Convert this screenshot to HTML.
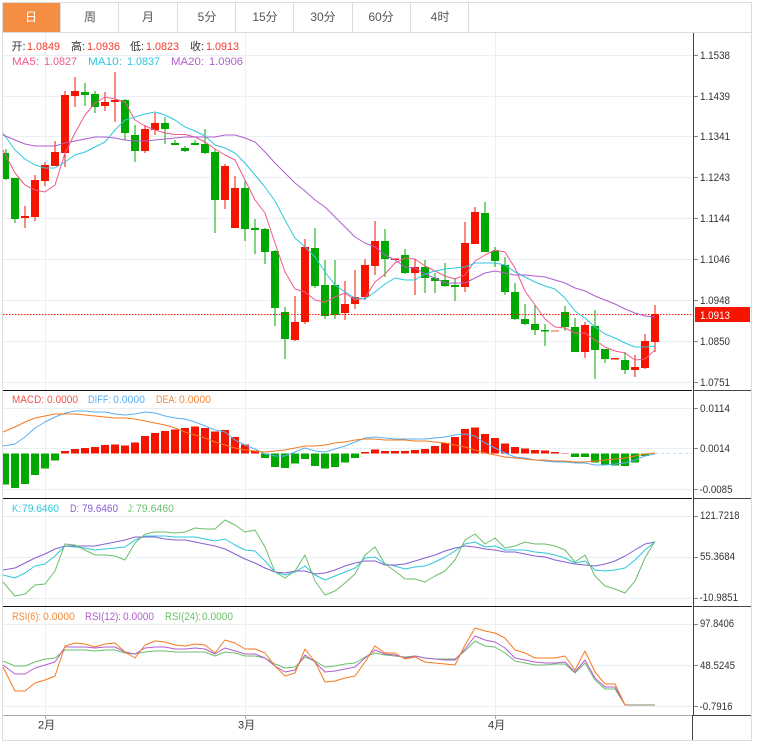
<!DOCTYPE html>
<html><head><meta charset="utf-8"><style>
html,body{margin:0;padding:0;background:#fff;width:757px;height:746px;overflow:hidden}
svg{display:block}
text{font-family:"Liberation Sans","Noto Sans CJK SC",sans-serif;font-size:11px}
.t{font-size:12px;fill:#555;text-anchor:middle}
.a{fill:#333}
.l{fill:none;stroke-width:1;stroke-linejoin:round}
</style></head><body>
<svg width="757" height="746" viewBox="0 0 757 746" xmlns="http://www.w3.org/2000/svg">
<rect x="2.5" y="2.5" width="749" height="738" fill="#fff" stroke="#dcdcdc"/>
<rect x="3" y="3" width="57" height="29" fill="#f58d42"/>
<path d="M60.5 3V32M118.5 3V32M177.5 3V32M235.5 3V32M293.5 3V32M352.5 3V32M410.5 3V32M468.5 3V32M3 32.5H751" stroke="#dcdcdc" fill="none"/>
<text class="t" x="31" y="21" style="fill:#fff">日</text>
<text class="t" x="90" y="21">周</text>
<text class="t" x="148" y="21">月</text>
<text class="t" x="207" y="21">5分</text>
<text class="t" x="265" y="21">15分</text>
<text class="t" x="323" y="21">30分</text>
<text class="t" x="381" y="21">60分</text>
<text class="t" x="440" y="21">4时</text>

<!-- grid -->
<path d="M3 55.5H692M3 96.5H692M3 136.5H692M3 177.5H692M3 218.5H692M3 259.5H692M3 300.5H692M3 341.5H692M3 382.5H692M3 408.5H692M3 448.5H692M3 489.5H692M3 516.5H692M3 557.5H692M3 598.5H692M3 624.5H692M3 665.5H692M3 706.5H692M45.5 33V715M245.5 33V715M495.5 33V715" stroke="#e9eff3" fill="none"/>

<!-- candle wicks -->
<g stroke-width="1" fill="none">
<path stroke="#00a800" d="M6 149V180M15 178V223M85 83V106M95 91V113M125 99V140M135 125V162M165 117V144M175 140V145M185 146V152M195 140V145M205 129V154M215 149V233M245 181V241M255 219V254M265 228V264M275 250V326M285 307V359M315 228V288M325 260V319M335 260V319M385 229V277M405 249V274M425 260V293M435 273V293M445 263V287M455 278V301M485 202V252M495 247V267M505 257V295M515 283V320M525 304V325M535 305V335M545 324V346M565 306V331M575 318V352M595 310V379M605 349V363M625 352V374"/>
<path stroke="#f51400" d="M25 206V228M35 175V221M45 162V186M55 141V166M65 91V167M75 77V107M105 92V111M115 72V122M145 125V153M155 113V135M225 164V209M235 176V228M295 296V341M305 239V324M345 281V320M355 270V309M365 259V300M375 221V275M415 259V295M465 222V292M475 207V244M585 322V358M635 355V377M645 334V369M655 305V352"/>
</g>
<!-- green bodies -->
<g fill="#00a800">
<rect x="3" y="153" width="6" height="26"/><rect x="11" y="178" width="8" height="41"/><rect x="81" y="92" width="8" height="3"/><rect x="91" y="94" width="8" height="13"/><rect x="121" y="100" width="8" height="33"/><rect x="131" y="135" width="8" height="16"/><rect x="161" y="123" width="8" height="6"/><rect x="171" y="143" width="8" height="2"/><rect x="181" y="148" width="8" height="3"/><rect x="191" y="143" width="8" height="2"/><rect x="201" y="144" width="8" height="9"/><rect x="211" y="152" width="8" height="48"/><rect x="241" y="188" width="8" height="41"/><rect x="251" y="228" width="8" height="2"/><rect x="261" y="229" width="8" height="23"/><rect x="271" y="251" width="8" height="57"/><rect x="281" y="312" width="8" height="27"/><rect x="311" y="248" width="8" height="38"/><rect x="321" y="285" width="8" height="31"/><rect x="331" y="285" width="8" height="30"/><rect x="381" y="241" width="8" height="18"/><rect x="401" y="255" width="8" height="18"/><rect x="421" y="267" width="8" height="11"/><rect x="431" y="278" width="8" height="3"/><rect x="441" y="280" width="8" height="6"/><rect x="451" y="285" width="8" height="2"/><rect x="481" y="213" width="8" height="39"/><rect x="491" y="251" width="8" height="10"/><rect x="501" y="265" width="8" height="27"/><rect x="511" y="292" width="8" height="27"/><rect x="521" y="319" width="8" height="5"/><rect x="531" y="324" width="8" height="6"/><rect x="541" y="330" width="8" height="1.5"/><rect x="561" y="312" width="8" height="15"/><rect x="571" y="327" width="8" height="25"/><rect x="591" y="326" width="8" height="24"/><rect x="601" y="349" width="8" height="10"/><rect x="621" y="360" width="8" height="10"/>
</g>
<!-- red bodies -->
<g fill="#f51400">
<rect x="21" y="216" width="8" height="2"/><rect x="31" y="180" width="8" height="37"/><rect x="41" y="165" width="8" height="16"/><rect x="51" y="152" width="8" height="14"/><rect x="61" y="95" width="8" height="58"/><rect x="71" y="91" width="8" height="5"/><rect x="101" y="102" width="8" height="4"/><rect x="111" y="100" width="8" height="2"/><rect x="141" y="129" width="8" height="22"/><rect x="151" y="123" width="8" height="7"/><rect x="221" y="166" width="8" height="34"/><rect x="231" y="188" width="8" height="40"/><rect x="291" y="322" width="8" height="18"/><rect x="301" y="247" width="8" height="75"/><rect x="341" y="304" width="8" height="9"/><rect x="351" y="297" width="8" height="7"/><rect x="361" y="265" width="8" height="32"/><rect x="371" y="241" width="8" height="25"/><rect x="391" y="258.500" width="8" height="1.500"/><rect x="411" y="267" width="8" height="6"/><rect x="461" y="243" width="8" height="44"/><rect x="471" y="212" width="8" height="32"/><rect x="581" y="325" width="8" height="27"/><rect x="611" y="358" width="8" height="1.500"/><rect x="631" y="367" width="8" height="3"/><rect x="641" y="341" width="8" height="27"/><rect x="651" y="314" width="8" height="28"/>
<rect x="551" y="330" width="8" height="2" fill="#f9a8a0"/>
</g>
<path d="M3 314.500H693" stroke="#f51400" stroke-dasharray="1.500 1.500" fill="none"/>

<!-- MA lines -->
<polyline class="l" stroke="#f0588c" points="3,150 15,173 25,185 35,190 45,192 55,185 65,153 75,133 85,115 95,103 105,97 115,99 125,102 135,120 145,126 155,130 165,133 175,134.500 185,134.500 195,137 205,142 215,149 225,155 235,160 245,180 255,200 265,213 275,243 285,272 295,289 305,292 315,300 325,302 335,297 345,293 355,300 365,298 375,282 385,274 395,263 405,258 415,259 425,266 435,271 445,276 455,279 465,275 475,261 485,255 495,250 505,252 515,268 525,291 535,305 545,319 555,327 565,328 575,333 585,333 595,340 605,347 615,351 625,353 635,360 645,359 655,350"/>
<polyline class="l" stroke="#2fc8dc" points="3,133 15,150 25,159 35,165 45,168 55,168 65,162 75,155 85,152 95,147 105,142 115,130 125,120 135,117 145,114 155,112 165,115 175,120 185,127 195,131 205,136 215,145 225,148 235,153 245,163 255,175 265,187 275,201 285,220 295,238 305,247 315,257 325,272 335,285 345,292 355,298 365,299 375,292 385,284 395,278 405,280 415,280 425,274 435,271 445,269 455,268 465,267 475,263 485,263 495,263 505,265 515,272 525,277 535,282 545,286 555,289 565,298 575,311 585,318 595,327 605,334 615,338 625,343 635,347 645,347 655,346"/>
<polyline class="l" stroke="#b05ecf" points="3,135 15,140 25,144 35,146 45,146 55,146 65,143 75,141 85,139 95,137 105,137 115,138 125,140 135,141 145,141 155,140 165,139 175,138 185,137 195,137 205,137 215,137 225,135 235,135 245,138 255,142 265,152 275,163 285,173 295,183 305,191 315,200 325,207 335,217 345,227 355,237 365,243 375,247 385,255 395,260 405,267 415,268 425,274 435,278 445,283 455,283 465,283 475,278 485,273 495,271 505,273 515,275 525,275 535,276 545,277 555,280 565,283 575,288 585,291 595,296 605,300 615,304 625,309 635,313 645,316 655,317"/>

<text x="11.500" y="50" fill="#333">开:</text><text x="27" y="50" fill="#f5382c" textLength="33" lengthAdjust="spacingAndGlyphs">1.0849</text>
<text x="71" y="50" fill="#333">高:</text><text x="87" y="50" fill="#f5382c" textLength="33" lengthAdjust="spacingAndGlyphs">1.0936</text>
<text x="130" y="50" fill="#333">低:</text><text x="146" y="50" fill="#f5382c" textLength="33" lengthAdjust="spacingAndGlyphs">1.0823</text>
<text x="190" y="50" fill="#333">收:</text><text x="206" y="50" fill="#f5382c" textLength="33" lengthAdjust="spacingAndGlyphs">1.0913</text>
<text x="12" y="65" fill="#f0588c" textLength="27" lengthAdjust="spacingAndGlyphs">MA5:</text><text x="44" y="65" fill="#f0588c" textLength="33" lengthAdjust="spacingAndGlyphs">1.0827</text>
<text x="88" y="65" fill="#2fc8dc" textLength="34" lengthAdjust="spacingAndGlyphs">MA10:</text><text x="127" y="65" fill="#2fc8dc" textLength="33" lengthAdjust="spacingAndGlyphs">1.0837</text>
<text x="171" y="65" fill="#b05ecf" textLength="33" lengthAdjust="spacingAndGlyphs">MA20:</text><text x="209" y="65" fill="#b05ecf" textLength="34" lengthAdjust="spacingAndGlyphs">1.0906</text>

<!-- MACD bars -->
<g fill="#00a800">
<rect x="3" y="453.500" width="6" height="31"/><rect x="11" y="453.500" width="8" height="34.500"/><rect x="21" y="453.500" width="8" height="30.500"/><rect x="31" y="453.500" width="8" height="21.500"/><rect x="41" y="453.500" width="8" height="15"/><rect x="51" y="453.500" width="8" height="7"/><rect x="261" y="453.500" width="8" height="4.500"/><rect x="271" y="453.500" width="8" height="13.500"/><rect x="281" y="453.500" width="8" height="14.500"/><rect x="291" y="453.500" width="8" height="10"/><rect x="301" y="453.500" width="8" height="5.500"/><rect x="311" y="453.500" width="8" height="12.500"/><rect x="321" y="453.500" width="8" height="15"/><rect x="331" y="453.500" width="8" height="13.500"/><rect x="341" y="453.500" width="8" height="9"/><rect x="351" y="453.500" width="8" height="4.500"/><rect x="571" y="453.500" width="8" height="3.500"/><rect x="581" y="453.500" width="8" height="3.500"/><rect x="591" y="453.500" width="8" height="9"/><rect x="601" y="453.500" width="8" height="11"/><rect x="611" y="453.500" width="8" height="12"/><rect x="621" y="453.500" width="8" height="12.500"/><rect x="631" y="453.500" width="8" height="9"/><rect x="641" y="453.500" width="8" height="2.500"/>
</g>
<g fill="#f51400">
<rect x="61" y="451" width="8" height="2.500"/><rect x="71" y="449" width="8" height="4.500"/><rect x="81" y="448" width="8" height="5.500"/><rect x="91" y="447" width="8" height="6.500"/><rect x="101" y="445" width="8" height="8.500"/><rect x="111" y="444.500" width="8" height="9"/><rect x="121" y="445.500" width="8" height="8"/><rect x="131" y="442.500" width="8" height="11"/><rect x="141" y="436" width="8" height="17.500"/><rect x="151" y="433" width="8" height="20.500"/><rect x="161" y="431" width="8" height="22.500"/><rect x="171" y="429.500" width="8" height="24"/><rect x="181" y="428" width="8" height="25.500"/><rect x="191" y="426.500" width="8" height="27"/><rect x="201" y="428" width="8" height="25.500"/><rect x="211" y="431.500" width="8" height="22"/><rect x="221" y="430" width="8" height="23.500"/><rect x="231" y="437" width="8" height="16.500"/><rect x="241" y="444.500" width="8" height="9"/><rect x="251" y="450.500" width="8" height="3"/><rect x="361" y="452" width="8" height="1.500"/><rect x="371" y="449.500" width="8" height="4"/><rect x="381" y="451" width="8" height="2.500"/><rect x="391" y="451" width="8" height="2.500"/><rect x="401" y="451" width="8" height="2.500"/><rect x="411" y="450" width="8" height="3.500"/><rect x="421" y="449" width="8" height="4.500"/><rect x="431" y="446" width="8" height="7.500"/><rect x="441" y="443" width="8" height="10.500"/><rect x="451" y="437" width="8" height="16.500"/><rect x="461" y="429" width="8" height="24.500"/><rect x="471" y="427.500" width="8" height="26"/><rect x="481" y="434" width="8" height="19.500"/><rect x="491" y="438" width="8" height="15.500"/><rect x="501" y="443.500" width="8" height="10"/><rect x="511" y="447" width="8" height="6.500"/><rect x="521" y="448.500" width="8" height="5"/><rect x="531" y="450" width="8" height="3.500"/><rect x="541" y="450.500" width="8" height="3"/><rect x="551" y="452" width="8" height="1.500"/>
<rect x="561" y="453" width="8" height="1" fill="#f9a8a0"/>
</g>
<path d="M655 453.500H692" stroke="#bfe0f7" stroke-dasharray="3 3" fill="none"/>
<polyline class="l" stroke="#5ab0f5" points="3,446 15,444 25,437 35,428 45,422 55,417 65,413 75,411 85,411 95,412 105,412 115,414 125,415 135,414 145,412 155,413 165,416 175,418 185,419 195,422 205,426 215,430 225,432 235,440 245,445 255,449 265,454 275,456 285,456 295,452 305,448 315,451 325,452 335,449 345,446 355,442 365,438 375,437 385,438 395,439 405,439 415,439 425,439 435,438 445,437 455,435 465,434 475,436 485,443 495,448 505,453 515,457 525,458 535,460 545,461 555,462 565,462 575,463 585,463 595,465 605,465 615,464 625,463 635,460 645,456 655,454"/>
<polyline class="l" stroke="#f57a1f" points="3,432 15,427 25,422 35,418 45,416 55,414 65,414 75,414 85,415 95,416 105,417 115,418 125,418 135,419 145,421 155,423 165,425 175,428 185,432 195,435 205,438 215,442 225,445 235,448 245,450 255,451 265,452 275,451 285,450 295,448 305,446 315,446 325,445 335,443 345,442 355,440 365,439 375,439 385,440 395,440 405,440 415,441 425,441 435,442 445,443 455,445 465,447 475,450 485,453 495,455 505,457 515,458 525,459 535,460 545,460 555,461 565,461 575,462 585,462 595,461 605,460 615,459 625,458 635,456 645,454 655,453"/>
<text x="12" y="403" fill="#f5544a" textLength="32" lengthAdjust="spacingAndGlyphs">MACD:</text><text x="47" y="403" fill="#f5544a" textLength="31" lengthAdjust="spacingAndGlyphs">0.0000</text>
<text x="88" y="403" fill="#5ab0f5" textLength="23" lengthAdjust="spacingAndGlyphs">DIFF:</text><text x="113" y="403" fill="#5ab0f5" textLength="32" lengthAdjust="spacingAndGlyphs">0.0000</text>
<text x="156" y="403" fill="#f58a3a" textLength="21" lengthAdjust="spacingAndGlyphs">DEA:</text><text x="179" y="403" fill="#f58a3a" textLength="32" lengthAdjust="spacingAndGlyphs">0.0000</text>

<!-- KDJ -->
<polyline class="l" stroke="#2fc8dc" points="3,575 15,578 25,573 35,566 45,564 55,556 65,546 75,547 85,548 95,550 105,549 115,548 125,547 135,540 145,536 155,536 165,536 175,537 185,537 195,537 205,539 215,541 225,539 235,545 245,550 255,551 265,561 275,572 285,575 295,572 305,566 315,575 325,580 335,576 345,572 355,568 365,558 375,557 385,564 395,566 405,569 415,567 425,566 435,562 445,557 455,551 465,544 475,542 485,547 495,546 505,550 515,550 525,550 535,552 545,553 555,555 565,558 575,563 585,561 595,570 605,571 615,570 625,568 635,560 645,550 655,542"/>
<polyline class="l" stroke="#8a5fd0" points="3,570 15,568 25,563 35,558 45,554 55,549 65,546 75,546 85,546 95,546 105,544 115,542 125,540 135,537 145,537 155,537 165,539 175,540 185,540 195,542 205,544 215,546 225,549 235,554 245,559 255,563 265,568 275,572 285,573 295,571 305,571 315,574 325,573 335,570 345,566 355,563 365,561 375,561 385,565 395,565 405,564 415,561 425,558 435,555 445,551 455,548 465,546 475,547 485,549 495,550 505,552 515,552 525,554 535,556 545,557 555,560 565,562 575,564 585,565 595,566 605,564 615,561 625,556 635,550 645,544 655,542"/>
<polyline class="l" stroke="#6bbf6b" points="3,582 15,596 25,594 35,585 45,584 55,571 65,544 75,545 85,550 95,555 105,555 115,556 125,560 135,543 145,534 155,532 165,532 175,533 185,532 195,528 205,529 215,529 225,520 235,525 245,532 255,530 265,547 275,572 285,578 295,571 305,555 315,581 325,595 335,591 345,583 355,574 365,555 375,547 385,564 395,571 405,579 415,579 425,582 435,576 445,571 455,560 465,540 475,534 485,544 495,538 505,548 515,546 525,542 535,544 545,544 555,546 565,550 575,562 585,555 595,576 605,586 615,589 625,593 635,581 645,558 655,541"/>
<text x="12" y="512" fill="#2fc8dc" textLength="9" lengthAdjust="spacingAndGlyphs">K:</text><text x="22" y="512" fill="#2fc8dc" textLength="37" lengthAdjust="spacingAndGlyphs">79.6460</text>
<text x="70" y="512" fill="#8a5fd0" textLength="9" lengthAdjust="spacingAndGlyphs">D:</text><text x="82" y="512" fill="#8a5fd0" textLength="36" lengthAdjust="spacingAndGlyphs">79.6460</text>
<text x="128" y="512" fill="#6bbf6b" textLength="6" lengthAdjust="spacingAndGlyphs">J:</text><text x="136" y="512" fill="#6bbf6b" textLength="38" lengthAdjust="spacingAndGlyphs">79.6460</text>

<!-- RSI -->
<polyline class="l" stroke="#6bbf6b" points="3,661 15,666 25,666 35,662 45,659 55,658 65,650 75,650 85,650 95,651 105,650 115,650 125,653 135,654 145,652 155,651 165,651 175,652 185,652 195,652 205,652 215,656 225,652 235,653 245,656 255,656 265,658 275,664 285,668 295,667 305,657 315,661 325,667 335,666 345,664 355,663 365,657 375,653 385,655 395,656 405,657 415,656 425,658 435,659 445,659 455,659 465,651 475,641 485,646 495,647 505,653 515,661 525,663 535,665 545,665 555,664 565,664 575,673 585,663 595,680 605,689 615,689 625,705 655,705"/>
<polyline class="l" stroke="#b05ecf" points="3,665 15,674 25,674 35,668 45,665 55,662 65,647 75,647 85,647 95,648 105,647 115,647 125,652 135,654 145,648 155,647 165,647 175,649 185,649 195,648 205,649 215,654 225,648 235,651 245,654 255,654 265,658 275,666 285,672 295,670 305,655 315,662 325,672 335,671 345,669 355,667 365,658 375,650 385,654 395,655 405,658 415,656 425,658 435,659 445,660 455,660 465,649 475,636 485,640 495,642 505,648 515,658 525,660 535,662 545,663 555,663 565,662 575,672 585,660 595,678 605,687 615,687 625,705 655,705"/>
<polyline class="l" stroke="#f57a1f" points="3,667 15,691 25,691 35,683 45,680 55,676 65,646 75,643 85,644 95,647 105,644 115,643 125,652 135,658 145,645 155,641 165,642 175,645 185,646 195,644 205,645 215,653 225,640 235,643 245,649 255,649 265,653 275,666 285,676 295,673 305,649 315,662 325,682 335,681 345,678 355,676 365,662 375,646 385,653 395,653 405,659 415,657 425,662 435,663 445,664 455,665 465,645 475,628 485,631 495,633 505,638 515,650 525,653 535,658 545,658 555,658 565,656 575,670 585,651 595,672 605,684 615,684 625,705 655,705"/>
<path d="M625 705H655" stroke="#b0ab98" stroke-width="1.500" fill="none"/>
<text x="12" y="620" fill="#f58a3a" textLength="29" lengthAdjust="spacingAndGlyphs">RSI(6):</text><text x="43" y="620" fill="#f58a3a" textLength="32" lengthAdjust="spacingAndGlyphs">0.0000</text>
<text x="85" y="620" fill="#b05ecf" textLength="36" lengthAdjust="spacingAndGlyphs">RSI(12):</text><text x="123" y="620" fill="#b05ecf" textLength="31" lengthAdjust="spacingAndGlyphs">0.0000</text>
<text x="165" y="620" fill="#6bbf6b" textLength="36" lengthAdjust="spacingAndGlyphs">RSI(24):</text><text x="202" y="620" fill="#6bbf6b" textLength="31" lengthAdjust="spacingAndGlyphs">0.0000</text>

<!-- separators and axis -->
<path d="M3 390.500H692M3 498.500H692M3 606.500H692" stroke="#111" fill="none"/>
<path d="M693.500 33V715M692.500 715V740M693 390.500H751M693 498.500H751M693 606.500H751M693 715.500H751" stroke="#444" fill="none"/>
<path d="M3 715.500H692M45.500 715V719M245.500 715V719M495.500 715V719" stroke="#aaa" fill="none"/>
<path d="M694 55.500H698M694 96.500H698M694 136.500H698M694 177.500H698M694 218.500H698M694 259.500H698M694 300.500H698M694 341.500H698M694 382.500H698M694 408.500H698M694 448.500H698M694 489.500H698M694 516.500H698M694 557.500H698M694 598.500H698M694 624.500H698M694 665.500H698M694 706.500H698" stroke="#888" fill="none"/>
<text class="a" x="700" y="59" textLength="30" lengthAdjust="spacingAndGlyphs">1.1538</text>
<text class="a" x="700" y="100" textLength="30" lengthAdjust="spacingAndGlyphs">1.1439</text>
<text class="a" x="700" y="140" textLength="30" lengthAdjust="spacingAndGlyphs">1.1341</text>
<text class="a" x="700" y="181" textLength="30" lengthAdjust="spacingAndGlyphs">1.1243</text>
<text class="a" x="700" y="222" textLength="30" lengthAdjust="spacingAndGlyphs">1.1144</text>
<text class="a" x="700" y="263" textLength="30" lengthAdjust="spacingAndGlyphs">1.1046</text>
<text class="a" x="700" y="304" textLength="30" lengthAdjust="spacingAndGlyphs">1.0948</text>
<text class="a" x="700" y="345" textLength="30" lengthAdjust="spacingAndGlyphs">1.0850</text>
<text class="a" x="700" y="386" textLength="30" lengthAdjust="spacingAndGlyphs">1.0751</text>
<text class="a" x="700" y="412" textLength="30" lengthAdjust="spacingAndGlyphs">0.0114</text>
<text class="a" x="700" y="452" textLength="30" lengthAdjust="spacingAndGlyphs">0.0014</text>
<text class="a" x="699.500" y="493" textLength="33" lengthAdjust="spacingAndGlyphs">-0.0085</text>
<text class="a" x="700" y="519" textLength="39.500" lengthAdjust="spacingAndGlyphs">121.7218</text>
<text class="a" x="700" y="560" textLength="35" lengthAdjust="spacingAndGlyphs">55.3684</text>
<text class="a" x="699.500" y="601" textLength="38.500" lengthAdjust="spacingAndGlyphs">-10.9851</text>
<text class="a" x="700" y="627" textLength="34" lengthAdjust="spacingAndGlyphs">97.8406</text>
<text class="a" x="700" y="669" textLength="35" lengthAdjust="spacingAndGlyphs">48.5245</text>
<text class="a" x="699.500" y="710" textLength="33" lengthAdjust="spacingAndGlyphs">-0.7916</text>
<rect x="695" y="307" width="55" height="15" fill="#f51400"/>
<text x="700" y="319" fill="#fff" textLength="30" lengthAdjust="spacingAndGlyphs">1.0913</text>
<text class="a" x="38" y="728.500">2月</text>
<text class="a" x="238" y="728.500">3月</text>
<text class="a" x="488" y="728.500">4月</text>
</svg>
</body></html>
